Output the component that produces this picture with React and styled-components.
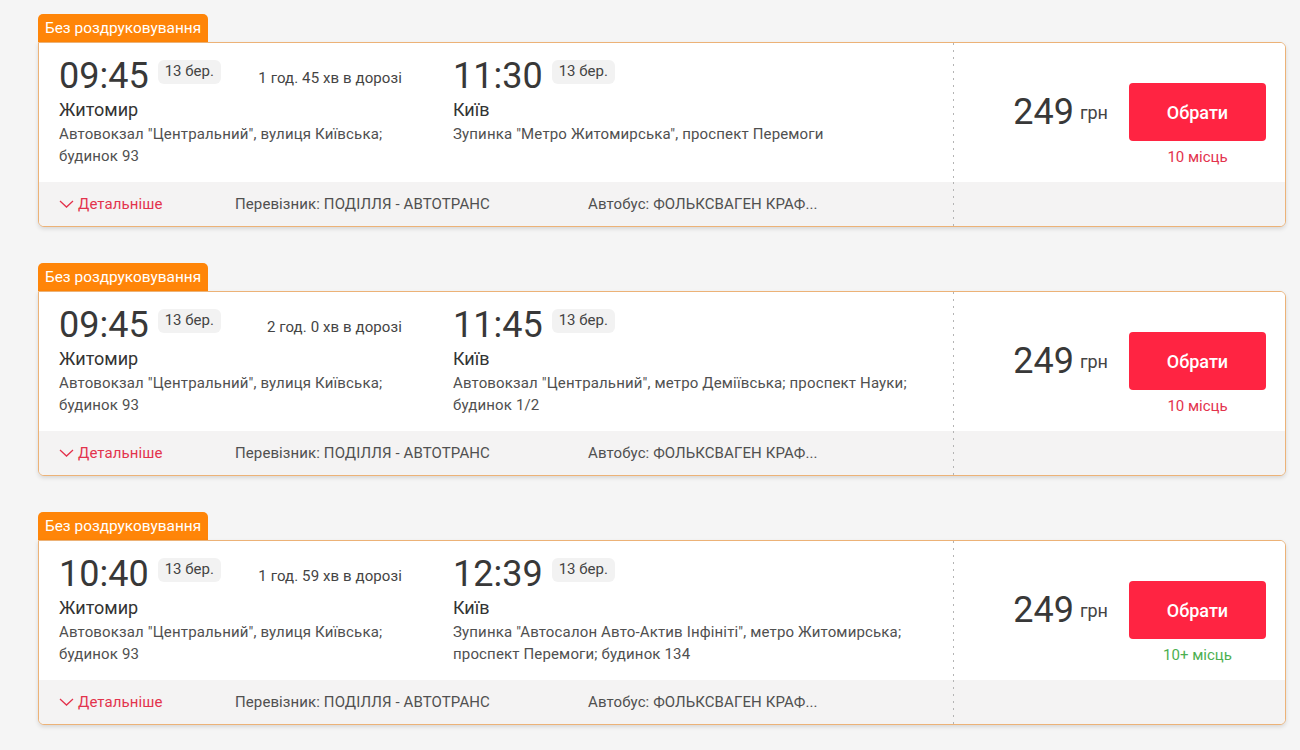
import React from "react";
import styled, { createGlobalStyle } from "styled-components";

const Global = createGlobalStyle`
  html, body { margin: 0; padding: 0; background: #f5f5f5; }
  body { font-family: Roboto, "Noto Sans", "Liberation Sans", sans-serif; color: #333; }
`;

const Page = styled.div`
  padding: 14px 14px 20px 38px;
  display: flex;
  flex-direction: column;
  gap: 36px;
`;

const Trip = styled.div`
  width: 1248px;
  display: flex;
  flex-direction: column;
  align-items: flex-start;
`;

const Badge = styled.div`
  height: 28px;
  line-height: 28px;
  padding: 0 7px;
  background: #ff8508;
  color: #fff;
  font-size: 15.4px;
  border-radius: 5px 5px 0 0;
  width: 156px;
  white-space: nowrap;
`;

const Card = styled.div`
  width: 100%;
  box-sizing: border-box;
  border: 1px solid #ecb277;
  border-radius: 0 6px 6px 6px;
  background: #fff;
  box-shadow: 0 2px 4px rgba(0, 0, 0, 0.12);
  display: grid;
  grid-template-columns: 1fr 332px;
  grid-template-rows: 139px 44px;
  overflow: hidden;
`;

const Main = styled.div`
  padding: 12px 20px 0 20px;
  display: flex;
  gap: 51px;
`;

const Point = styled.div`
  width: ${(p) => p.$w}px;
  display: flex;
  flex-direction: column;
`;

const TimeRow = styled.div`
  display: flex;
  align-items: flex-start;
`;

const Time = styled.div`
  font-size: 36px;
  line-height: 42px;
  color: #383838;
`;

const DateChip = styled.div`
  margin: 5px 0 0 9px;
  padding: 3px 7px 5px;
  font-size: 15px;
  line-height: 16px;
  background: #f2f2f2;
  border-radius: 6px;
  color: #444;
`;

const Duration = styled.div`
  margin: 13px 0 0 auto;
  font-size: 15px;
  letter-spacing: 0.1px;
  line-height: 20px;
  color: #444;
`;

const City = styled.div`
  margin-top: 2px;
  font-size: 18px;
  line-height: 22px;
  color: #333;
`;

const Address = styled.div`
  margin-top: 2px;
  font-size: 15px;
  letter-spacing: 0.15px;
  line-height: 22px;
  color: #505050;
`;

const dots = `linear-gradient(#b4b4b4 0 2px, transparent 2px) left top / 1px 7px repeat-y`;

const Aside = styled.div`
  background: ${dots}, #fff;
  padding: 40px 19px 0 0;
  display: flex;
  justify-content: flex-end;
  align-items: flex-start;
  gap: 21px;
`;

const PriceBox = styled.div`
  height: 58px;
  display: flex;
  align-items: center;
`;

const Price = styled.span`
  font-size: 36px;
  line-height: 42px;
  color: #383838;
`;

const Unit = styled.span`
  font-size: 18px;
  margin-left: 6px;
  color: #444;
`;

const BuyCol = styled.div`
  display: flex;
  flex-direction: column;
  align-items: center;
`;

const Button = styled.button`
  width: 137px;
  height: 58px;
  border: 0;
  border-radius: 4px;
  background: #ff2442;
  color: #fff;
  font-family: inherit;
  font-size: 18px;
  font-weight: 500;
  cursor: pointer;
`;

const Seats = styled.div`
  margin-top: 6px;
  font-size: 15px;
  line-height: 20px;
  color: ${(p) => (p.$many ? "#4caf50" : "#e3334d")};
`;

const Footer = styled.div`
  background: #f4f3f3;
  display: flex;
  align-items: center;
  padding-left: 20px;
  font-size: 15px;
  letter-spacing: 0.1px;
  line-height: 20px;
  color: #505050;
`;

const AsideFooter = styled.div`
  background: ${dots}, #f4f3f3;
`;

const More = styled.div`
  width: 176px;
  display: flex;
  align-items: center;
  gap: 4px;
  color: #e3334d;
  font-size: 15px;
`;

const FooterCell = styled.div`
  width: ${(p) => p.$w || "auto"};
  white-space: nowrap;
`;

const Chevron = () => (
  <svg width="15" height="8" viewBox="0 0 15 8" fill="none">
    <polyline points="1,1 7.5,7 14,1" stroke="#e3334d" strokeWidth="1.3" />
  </svg>
);

const trips = [
  {
    dep: { time: "09:45", date: "13 бер.", city: "Житомир", addr: 'Автовокзал "Центральний", вулиця Київська; будинок 93' },
    duration: "1 год. 45 хв в дорозі",
    arr: { time: "11:30", date: "13 бер.", city: "Київ", addr: 'Зупинка "Метро Житомирська", проспект Перемоги' },
    price: 249,
    seats: "10 місць",
    many: false,
  },
  {
    dep: { time: "09:45", date: "13 бер.", city: "Житомир", addr: 'Автовокзал "Центральний", вулиця Київська; будинок 93' },
    duration: "2 год. 0 хв в дорозі",
    arr: { time: "11:45", date: "13 бер.", city: "Київ", addr: 'Автовокзал "Центральний", метро Деміївська; проспект Науки; будинок 1/2' },
    price: 249,
    seats: "10 місць",
    many: false,
  },
  {
    dep: { time: "10:40", date: "13 бер.", city: "Житомир", addr: 'Автовокзал "Центральний", вулиця Київська; будинок 93' },
    duration: "1 год. 59 хв в дорозі",
    arr: { time: "12:39", date: "13 бер.", city: "Київ", addr: 'Зупинка "Автосалон Авто-Актив Інфініті", метро Житомирська; проспект Перемоги; будинок 134' },
    price: 249,
    seats: "10+ місць",
    many: true,
  },
];

function TripCard({ t }) {
  return (
    <Trip>
      <Badge>Без роздруковування</Badge>
      <Card>
        <Main>
          <Point $w={343}>
            <TimeRow>
              <Time>{t.dep.time}</Time>
              <DateChip>{t.dep.date}</DateChip>
              <Duration>{t.duration}</Duration>
            </TimeRow>
            <City>{t.dep.city}</City>
            <Address>{t.dep.addr}</Address>
          </Point>
          <Point $w={470}>
            <TimeRow>
              <Time>{t.arr.time}</Time>
              <DateChip>{t.arr.date}</DateChip>
            </TimeRow>
            <City>{t.arr.city}</City>
            <Address>{t.arr.addr}</Address>
          </Point>
        </Main>
        <Aside>
          <PriceBox>
            <Price>{t.price}</Price>
            <Unit>грн</Unit>
          </PriceBox>
          <BuyCol>
            <Button>Обрати</Button>
            <Seats $many={t.many}>{t.seats}</Seats>
          </BuyCol>
        </Aside>
        <Footer>
          <More>
            <Chevron />
            Детальніше
          </More>
          <FooterCell $w="353px">Перевізник: ПОДІЛЛЯ - АВТОТРАНС</FooterCell>
          <FooterCell>Автобус: ФОЛЬКСВАГЕН КРАФ...</FooterCell>
        </Footer>
        <AsideFooter />
      </Card>
    </Trip>
  );
}

export default function App() {
  return (
    <>
      <Global />
      <Page>
        {trips.map((t, i) => (
          <TripCard key={i} t={t} />
        ))}
      </Page>
    </>
  );
}
